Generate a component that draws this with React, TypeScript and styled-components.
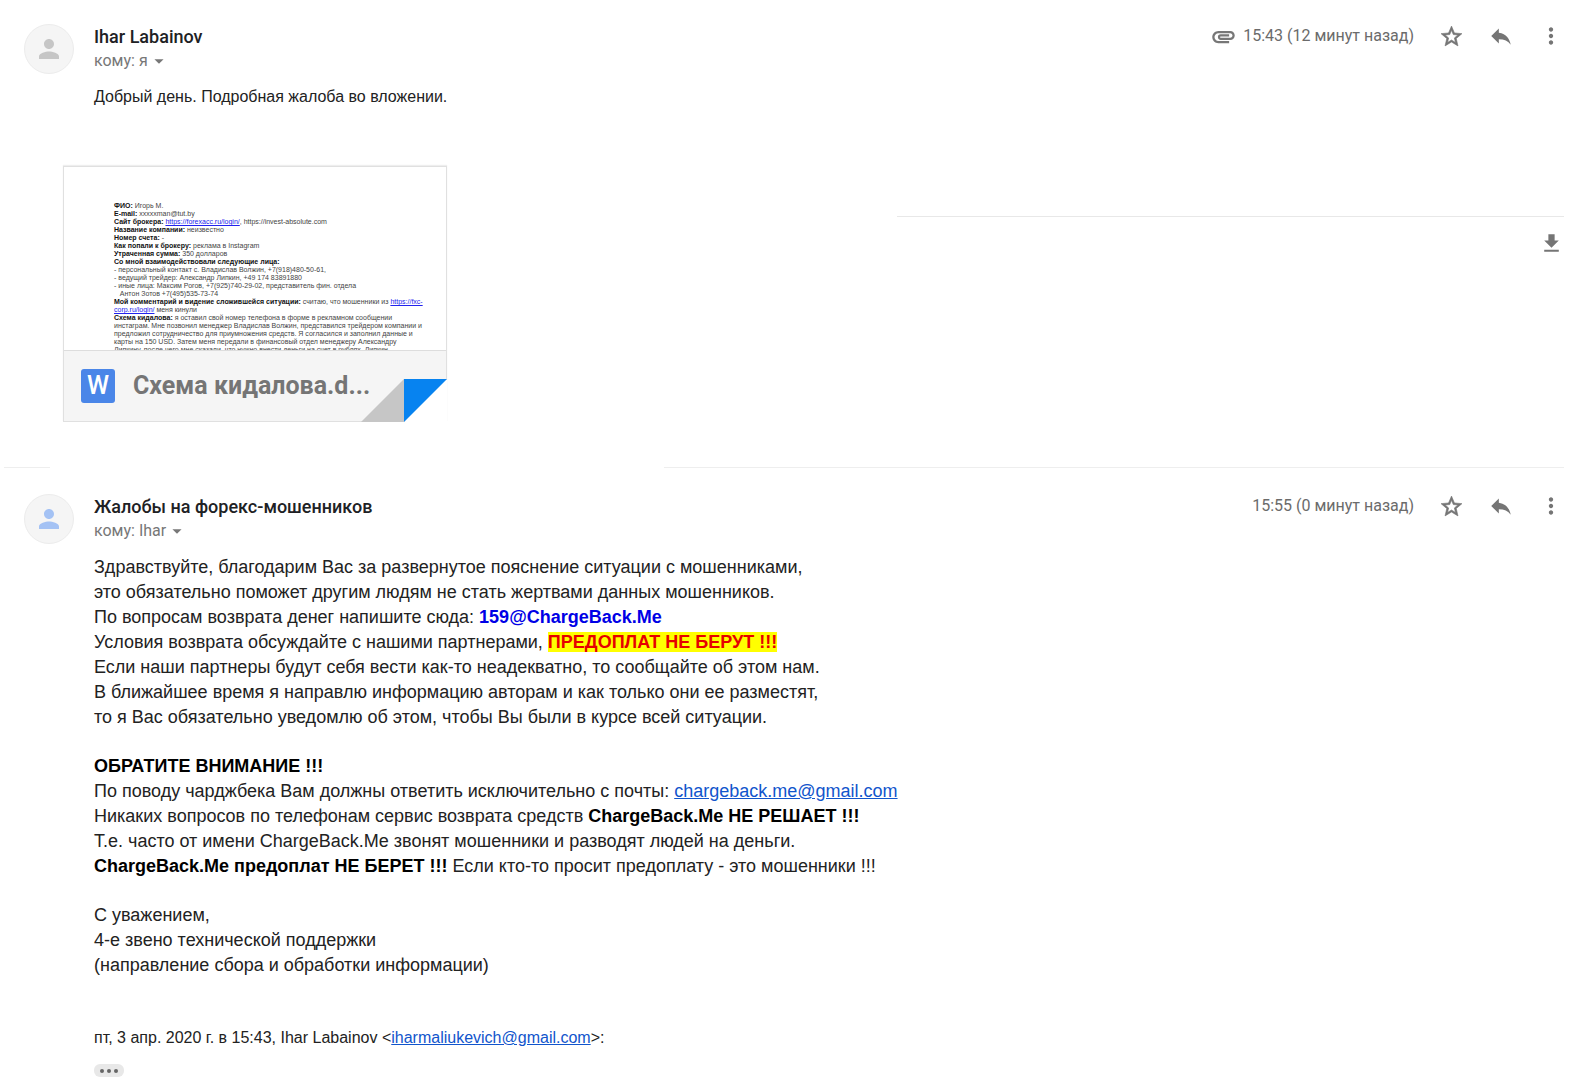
import React from "react";
import styled, { createGlobalStyle } from "styled-components";
import {
  MdArrowDropDown,
  MdAttachment,
  MdGetApp,
  MdMoreVert,
  MdPerson,
  MdReply,
  MdStarBorder,
} from "react-icons/md";

const GlobalStyle = createGlobalStyle`
  *, *::before, *::after { box-sizing: border-box; }
  body {
    margin: 0;
    background: #fff;
    color: #222;
    font-family: Roboto, "Liberation Sans", sans-serif;
  }
  button { margin: 0; padding: 0; border: 0; background: none; font: inherit; cursor: pointer; }
  p { margin: 0; }
`;

const Thread = styled.main`
  padding: 24px 0 12px;
`;

const Message = styled.article`
  display: grid;
  grid-template-columns: 50px minmax(0, 1fr);
  column-gap: 20px;
  padding: 0 2px 0 24px;
`;

const Avatar = styled.div<{ $color: string }>`
  display: flex;
  align-items: center;
  justify-content: center;
  width: 50px;
  height: 50px;
  border: 1px solid #ececec;
  border-radius: 50%;
  background: #f5f5f5;
  color: ${(p) => p.$color};
`;

const Header = styled.header`
  display: flex;
  justify-content: space-between;
  align-items: flex-start;
`;

const Sender = styled.h3`
  margin: 0;
  font-size: 18px;
  line-height: 25px;
  font-weight: 500;
  color: #202124;
`;

const Recipient = styled.button`
  display: flex;
  align-items: center;
  font-size: 16px;
  line-height: 24px;
  color: #777;
`;

const Actions = styled.div`
  display: flex;
  align-items: center;
  height: 24px;
  color: #777;
`;

const Time = styled.time`
  margin: 0 12px 0 6px;
  font-size: 16px;
  line-height: 24px;
  color: #6b6b6b;
`;

const IconButton = styled.button`
  display: flex;
  align-items: center;
  justify-content: center;
  width: 50px;
  height: 26px;
  color: #757575;
`;

const Star = styled(MdStarBorder)`
  stroke-width: 0.6;

  path[fill="none"] { stroke: none; }
`;

const ShortBody = styled.div`
  padding-top: 12px;
  font: 16px/24px "Liberation Sans", Arial, sans-serif;
  color: #222;
`;

const LongBody = styled.div`
  display: flex;
  flex-direction: column;
  gap: 24px;
  padding-top: 12px;
  font: 18px/25px "Liberation Sans", Arial, sans-serif;
  color: #222;

  b { color: #000; }
`;

const Link = styled.a`
  color: #15c;
`;

const MailLink = styled.a`
  font-weight: 700;
  color: #0000e6;
  text-decoration: none;
`;

const Highlight = styled.mark`
  background: #ff0;
  color: #e60000;
  font-weight: 700;
`;

const Attachments = styled.section`
  display: flex;
  align-items: flex-start;
  padding: 57px 14px 0 63px;
`;

const Card = styled.a`
  position: relative;
  display: block;
  flex: none;
  width: 384px;
  border: 1px solid #e0e0e0;
  box-shadow: 0 -1px 1px #eee;
  color: #757575;
  text-decoration: none;
`;

const Preview = styled.div`
  height: 183px;
  padding: 35px 16px 0 50px;
  overflow: hidden;
  font: 7px/8px "Liberation Sans", Arial, sans-serif;
  color: #444;
  white-space: nowrap;

  b { color: #111; }
  u { color: #22e; }
`;

const CardFooter = styled.div`
  display: flex;
  align-items: center;
  gap: 18px;
  height: 71px;
  padding-left: 17px;
  border-top: 1px solid #ddd;
  background: #f5f5f5;
`;

const FileBadge = styled.span`
  width: 34px;
  height: 34px;
  border-radius: 3px;
  background: #4a86e8;
  color: #fff;
  font-size: 25px;
  line-height: 34px;
  font-weight: 500;
  text-align: center;
`;

const FileName = styled.span`
  font-size: 25px;
  line-height: 32px;
  font-weight: 700;
`;

const Fold = styled.svg`
  position: absolute;
  right: -1px;
  bottom: -1px;
`;

const DownloadBar = styled.div`
  display: flex;
  flex: 1;
  justify-content: flex-end;
  margin: 50px 0 0 450px;
  padding-top: 14px;
  border-top: 1px solid #e8e8e8;
`;

const DownloadButton = styled.button`
  display: flex;
  width: 25px;
  height: 25px;
  color: #757575;
`;

const Separator = styled.div`
  display: flex;
  justify-content: space-between;
  gap: 614px;
  padding: 45px 14px 26px 4px;
`;

const Rule = styled.span<{ $grow?: boolean }>`
  flex: ${(p) => (p.$grow ? "1" : "0 0 46px")};
  height: 1px;
  background: #eee;
`;

const Quote = styled.p`
  padding-top: 48px;
  font: 16px/24px "Liberation Sans", Arial, sans-serif;
`;

const MoreButton = styled.button`
  display: flex;
  align-items: center;
  justify-content: center;
  gap: 3px;
  width: 30px;
  height: 13px;
  margin-top: 14px;
  border-radius: 6px;
  background: #e8e8e8;
`;

const Dot = styled.i`
  width: 4px;
  height: 4px;
  border-radius: 50%;
  background: #666;
`;

type HeadProps = { sender: string; to: string; time: string; clip?: boolean };

function MessageHead({ sender, to, time, clip }: HeadProps) {
  return (
    <Header>
      <div>
        <Sender>{sender}</Sender>
        <Recipient type="button">
          кому: {to}
          <MdArrowDropDown size={22} />
        </Recipient>
      </div>
      <Actions>
        {clip && <MdAttachment size={27} />}
        <Time>{time}</Time>
        <IconButton type="button" aria-label="Пометить">
          <Star size={25} />
        </IconButton>
        <IconButton type="button" aria-label="Ответить">
          <MdReply size={26} />
        </IconButton>
        <IconButton type="button" aria-label="Ещё">
          <MdMoreVert size={26} />
        </IconButton>
      </Actions>
    </Header>
  );
}

function DocumentPreview() {
  return (
    <Preview>
      <div><b>ФИО:</b> Игорь М.</div>
      <div><b>E-mail:</b> xxxxxman@tut.by</div>
      <div><b>Сайт брокера:</b> <u>https://forexacc.ru/login/</u>, https://invest-absolute.com</div>
      <div><b>Название компании:</b> неизвестно</div>
      <div><b>Номер счета:</b> -</div>
      <div><b>Как попали к брокеру:</b> реклама в Instagram</div>
      <div><b>Утраченная сумма:</b> 350 долларов</div>
      <div><b>Со мной взаимодействовали следующие лица:</b></div>
      <div>- персональный контакт с. Владислав Волжин, +7(918)480-50-61,</div>
      <div>- ведущий трейдер: Александр Липкин, +49 174 83891880</div>
      <div>- иные лица: Максим Рогов, +7(925)740-29-02, представитель фин. отдела</div>
      <div>&nbsp;&nbsp; Антон Зотов +7(495)535-73-74</div>
      <div><b>Мой комментарий и видение сложившейся ситуации:</b> считаю, что мошенники из <u>https://fxc-</u></div>
      <div><u>corp.ru/login/</u> меня кинули</div>
      <div><b>Схема кидалова:</b> я оставил свой номер телефона в форме в рекламном сообщении</div>
      <div>инстаграм. Мне позвонил менеджер Владислав Волжин, представился трейдером компании и</div>
      <div>предложил сотрудничество для приумножения средств. Я согласился и заполнил данные и</div>
      <div>карты на 150 USD. Затем меня передали в финансовый отдел менеджеру Александру</div>
      <div>Липкину, после чего мне сказали, что нужно внести деньги на счет в рублях. Липкин</div>
    </Preview>
  );
}

export default function App() {
  return (
    <>
      <GlobalStyle />
      <Thread>
        <Message>
          <Avatar $color="#c6c6c6"><MdPerson size={30} /></Avatar>
          <div>
            <MessageHead sender="Ihar Labainov" to="я" time="15:43 (12 минут назад)" clip />
            <ShortBody>Добрый день. Подробная жалоба во вложении.</ShortBody>
          </div>
        </Message>

        <Attachments>
          <Card href="#attachment">
            <DocumentPreview />
            <CardFooter>
              <FileBadge>W</FileBadge>
              <FileName>Схема кидалова.d...</FileName>
            </CardFooter>
            <Fold width="86" height="43" viewBox="0 0 86 43" aria-hidden="true">
              <path d="M43 43H86V0Z" fill="#fff" />
              <path d="M43 0V43H0Z" fill="#c6c6c6" />
              <path d="M43 0H86L43 43Z" fill="#0783f0" />
            </Fold>
          </Card>
          <DownloadBar>
            <DownloadButton type="button" aria-label="Скачать">
              <MdGetApp size={25} />
            </DownloadButton>
          </DownloadBar>
        </Attachments>

        <Separator>
          <Rule />
          <Rule $grow />
        </Separator>

        <Message>
          <Avatar $color="#a4c2f4"><MdPerson size={30} /></Avatar>
          <div>
            <MessageHead sender="Жалобы на форекс-мошенников" to="Ihar" time="15:55 (0 минут назад)" />
            <LongBody>
              <p>
                Здравствуйте, благодарим Вас за развернутое пояснение ситуации с мошенниками,<br />
                это обязательно поможет другим людям не стать жертвами данных мошенников.<br />
                По вопросам возврата денег напишите сюда: <MailLink href="mailto:159@ChargeBack.Me">159@ChargeBack.Me</MailLink><br />
                Условия возврата обсуждайте с нашими партнерами, <Highlight>ПРЕДОПЛАТ НЕ БЕРУТ !!!</Highlight><br />
                Если наши партнеры будут себя вести как-то неадекватно, то сообщайте об этом нам.<br />
                В ближайшее время я направлю информацию авторам и как только они ее разместят,<br />
                то я Вас обязательно уведомлю об этом, чтобы Вы были в курсе всей ситуации.
              </p>
              <p>
                <b>ОБРАТИТЕ ВНИМАНИЕ !!!</b><br />
                По поводу чарджбека Вам должны ответить исключительно с почты: <Link href="mailto:chargeback.me@gmail.com">chargeback.me@gmail.com</Link><br />
                Никаких вопросов по телефонам сервис возврата средств <b>ChargeBack.Me НЕ РЕШАЕТ !!!</b><br />
                Т.е. часто от имени ChargeBack.Me звонят мошенники и разводят людей на деньги.<br />
                <b>ChargeBack.Me предоплат НЕ БЕРЕТ !!!</b> Если кто-то просит предоплату - это мошенники !!!
              </p>
              <p>
                С уважением,<br />
                4-е звено технической поддержки<br />
                (направление сбора и обработки информации)
              </p>
            </LongBody>
            <Quote>
              пт, 3 апр. 2020 г. в 15:43, Ihar Labainov &lt;<Link href="mailto:iharmaliukevich@gmail.com">iharmaliukevich@gmail.com</Link>&gt;:
            </Quote>
            <MoreButton type="button" aria-label="Показать цитату">
              <Dot /><Dot /><Dot />
            </MoreButton>
          </div>
        </Message>
      </Thread>
    </>
  );
}
